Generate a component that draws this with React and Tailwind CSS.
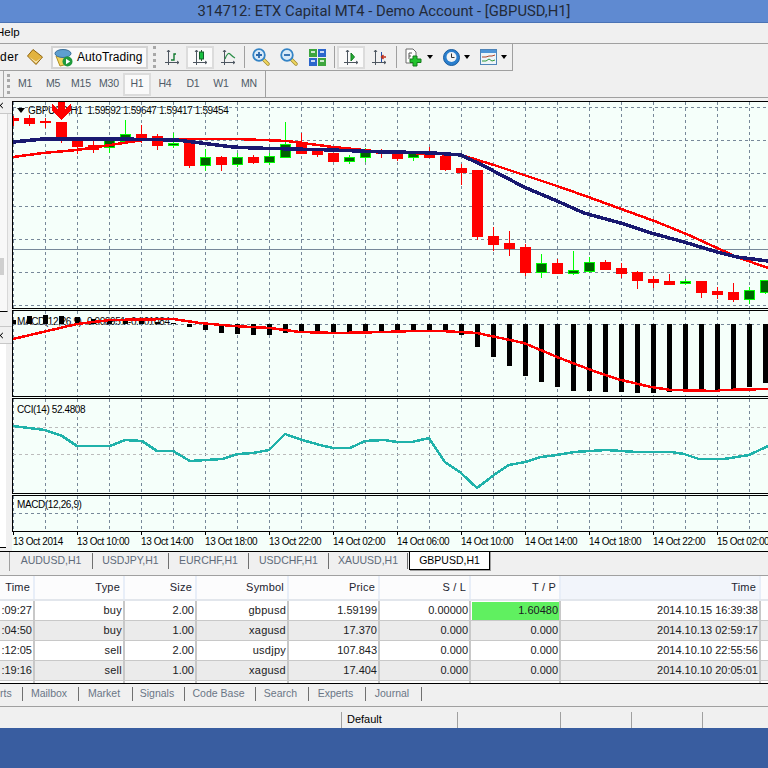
import React from "react";

// [bodyTop, bodyBottom, wickTop, wickBottom, up]
const candles = [
  [118, 120, 116, 125, 0], [118, 123, 115, 125, 0], [121, 122, 118, 127, 0], [122, 137, 122, 142, 0],
  [141, 146, 141, 153, 0], [145, 149, 141, 152, 0], [140, 147, 137, 152, 1], [134, 141, 120, 141, 1],
  [134, 137, 125, 142, 0], [136, 145, 134, 149, 0], [143, 145, 133, 147, 1], [141, 165, 138, 167, 0],
  [157, 165, 149, 170, 1], [157, 164, 156, 170, 0], [157, 164, 153, 166, 1], [157, 162, 155, 163, 0],
  [156, 162, 153, 164, 1], [144, 157, 122, 157, 1], [143, 153, 133, 153, 0], [151, 154, 148, 156, 0],
  [153, 161, 153, 161, 0], [157, 161, 155, 163, 1], [149, 157, 148, 161, 1], [150, 153, 149, 157, 0],
  [152, 158, 152, 160, 0], [153, 157, 153, 160, 1], [152, 157, 147, 157, 0], [156, 169, 156, 170, 0],
  [168, 172, 164, 184, 0], [170, 236, 170, 239, 0], [236, 244, 227, 250, 0], [243, 248, 231, 255, 0],
  [247, 272, 244, 275, 0], [263, 272, 254, 277, 1], [263, 273, 259, 273, 0], [270, 273, 251, 274, 1],
  [262, 271, 257, 272, 1], [262, 269, 260, 269, 0], [268, 273, 263, 277, 0], [272, 280, 271, 288, 0],
  [279, 282, 276, 287, 0], [281, 284, 274, 284, 0], [281, 283, 279, 284, 1], [281, 292, 281, 297, 0],
  [291, 294, 287, 298, 0], [292, 299, 283, 301, 0], [290, 299, 287, 303, 1], [280, 292, 280, 293, 1],
];

const navyLine = "13,142 43,139 120,139 177,140 233,147 253,148 333,150 384,152 397,152 434,153 461,155 484,166 524,187 557,201 584,213 624,224 651,233 684,242 717,252 737,257 768,261";
const redLine = "13,157 43,153 77,150 117,144 143,140 177,139 237,139 287,141 333,147 384,152 461,155 494,165 524,175 557,186 591,198 624,210 657,222 691,236 717,248 737,257 768,268";
const signalLine = "13,339 77,324 110,320 173,319 200,323 233,326 270,328 300,332 337,333 384,332 414,331 441,331 477,333 524,343 557,357 591,370 617,379 651,387 671,390 717,391 721,390 768,389";
const cciLine = "13,426 45,430 62,436 77,446 110,446 125,440 142,441 157,451 173,451 190,461 222,459 238,454 253,453 269,450 285,434 302,440 320,445 333,448 350,448 365,441 384,440 397,442 412,442 429,438 445,462 461,473 477,488 494,475 509,465 525,462 541,457 557,455 574,452 606,450 637,452 671,452 684,454 699,459 724,459 749,455 768,446";

// y where each MACD bar stops, bar starts at the 324 zero line
const macdBars = [320, 316, 315, 316, 317, 319, 320, 321, 321, 322, 323, 327, 330, 333, 334, 335, 335, 333, 332, 332, 332, 332, 331, 331, 332, 332, 331, 332, 335, 347, 357, 366, 376, 382, 387, 391, 391, 392, 392, 393, 393, 392, 391, 391, 390, 389, 387, 383];

const gridX = Array.from({ length: 24 }, (_, i) => 13 + i * 32);
const timeLabels = ["13 Oct 2014", "13 Oct 10:00", "13 Oct 14:00", "13 Oct 18:00", "13 Oct 22:00", "14 Oct 02:00", "14 Oct 06:00", "14 Oct 10:00", "14 Oct 14:00", "14 Oct 18:00", "14 Oct 22:00", "15 Oct 02:00"];
const frames = ["M1", "M5", "M15", "M30", "H1", "H4", "D1", "W1", "MN"];

const chartTabs = [
  { name: "AUDUSD,H1", w: "w-[83px]" },
  { name: "USDJPY,H1", w: "w-[76px]" },
  { name: "EURCHF,H1", w: "w-[80px]" },
  { name: "USDCHF,H1", w: "w-[80px]" },
  { name: "XAUUSD,H1", w: "w-[79px]" },
];

const bottomTabs = [
  { name: "rts", w: "w-[23px]", cls: "justify-start" },
  { name: "Mailbox", w: "w-[56px]" },
  { name: "Market", w: "w-[54px]" },
  { name: "Signals", w: "w-[52px]" },
  { name: "Code Base", w: "w-[71px]" },
  { name: "Search", w: "w-[53px]" },
  { name: "Experts", w: "w-[57px]" },
  { name: "Journal", w: "w-[56px]" },
];

const rows = [
  [":09:27", "buy", "2.00", "gbpusd", "1.59199", "0.00000", "1.60480", "2014.10.15 16:39:38"],
  [":04:50", "buy", "1.00", "xagusd", "17.370", "0.000", "0.000", "2014.10.13 02:59:17"],
  [":12:05", "sell", "2.00", "usdjpy", "107.843", "0.000", "0.000", "2014.10.10 22:55:56"],
  [":19:16", "sell", "1.00", "xagusd", "17.404", "0.000", "0.000", "2014.10.10 20:05:01"],
];
const heads = ["Time", "Type", "Size", "Symbol", "Price", "S / L", "T / P", "Time"];
const tableCols = "grid grid-cols-[35px_90px_72px_92px_91px_91px_90px_200px_7px]";

function Grid({ y, top, height, hColor = "#778899" }) {
  return (
    <g stroke="#778899" strokeWidth="1" strokeDasharray="3 3">
      {gridX.map((x) => <line key={x} x1={x + 0.5} x2={x + 0.5} y1={top} y2={top + height} />)}
      {y.map((v) => <line key={v} x1="13" x2="768" y1={v + 0.5} y2={v + 0.5} stroke={hColor} />)}
    </g>
  );
}

function Pane({ top, height, h, label, labelTop = "top-[4px]", labelLeft = "left-[4px]", children, extra }) {
  return (
    <div className={`relative border-y border-l border-black bg-[#f5fffa] ${h}`}>
      <div className={`absolute ${labelLeft} ${labelTop} whitespace-nowrap text-[10px] leading-[14px] tracking-[-0.38px] text-black`}>{label}</div>
      <svg className="relative block" width="755" height={height} viewBox={`13 ${top} 755 ${height}`} shapeRendering="crispEdges">
        {children}
      </svg>
      {extra}
    </div>
  );
}

function Axis({ children }) {
  return (
    <svg width="16" height="17" viewBox="0 0 16 17" fill="none">
      <path d="M4.5 1V16M1 13.5H15M3 3L4.5 1L6 3M13 12L15 13.5L13 15" stroke="#4d5660" strokeWidth="1" />
      {children}
    </svg>
  );
}

function Magnifier({ plus }) {
  return (
    <svg width="18" height="18" viewBox="0 0 18 18" fill="none">
      <path d="M11 11L16 16" stroke="#a08a30" strokeWidth="3.4" strokeLinecap="round" />
      <path d="M11 11L16 16" stroke="#f1d860" strokeWidth="1.8" strokeLinecap="round" />
      <circle cx="7" cy="7" r="5.8" fill="#d9eaf8" stroke="#3484c6" strokeWidth="1.8" />
      <path d={plus ? "M4 7H10M7 4V10" : "M4 7H10"} stroke="#2a69ad" strokeWidth="1.8" />
    </svg>
  );
}

function Arrow() {
  return (
    <svg className="ml-[4px]" width="6" height="4" viewBox="0 0 6 4"><path d="M0 0H6L3 4Z" fill="#000" /></svg>
  );
}

function Sep({ cls }) {
  return <div className={`h-[22px] w-px bg-[#a0a0a0] ${cls}`} />;
}

function Cell({ pressed, cls = "", children }) {
  return (
    <div className={`flex h-[23px] w-[28px] items-center justify-center ${pressed ? "border-2 border-[#dcdcdc] bg-[#fafafa]" : ""} ${cls}`}>
      {children}
    </div>
  );
}

function CloseGlyph() {
  return (
    <svg width="3" height="7" viewBox="0 0 3 7"><path d="M-2 0.5L3 6.5M3 0.5L-2 6.5" stroke="#000" fill="none" /></svg>
  );
}

export default function App() {
  return (
    <div className="flex h-[768px] w-[768px] flex-col overflow-hidden bg-[#f0f0f0] font-['Liberation_Sans',sans-serif] text-[11px] text-black">
      {/* title */}
      <div className="flex h-[23px] items-center justify-center border-b border-[#4a73b5] bg-[#5f8ad1] font-['Roboto',sans-serif] text-[14.8px] text-[#232a38]">
        314712: ETX Capital MT4 - Demo Account - [GBPUSD,H1]
      </div>

      {/* menu */}
      <div className="-ml-[4px] flex h-[20px] items-center text-[11.5px]">Help</div>

      {/* main toolbar */}
      <div className="h-[28px] border-t border-[#a0a0a0]">
        <div className="flex h-[27px] w-[513px] items-center border-r border-b border-[#a0a0a0]">
          <span className="w-[27px] text-[12px] tracking-[0.5px]">der</span>
          <svg width="16" height="16" viewBox="0 0 16 16">
            <path d="M0.5 7L6 0.5L15.5 8L9 15.5Z" fill="#e2b340" stroke="#8f6410" />
            <path d="M1.5 7.5L9 14L14.5 8.5L9 12.5Z" fill="#f7ecc4" />
          </svg>
          <div className="ml-[8px] flex h-[23px] w-[97px] items-center border-2 border-[#d4d4d4] bg-[#fafafa] pl-[1px]">
            <svg width="19" height="19" viewBox="0 0 19 19">
              <path d="M2 8L13 7L14 16L6 18Z" fill="#f2d45c" stroke="#b08f20" />
              <ellipse cx="9" cy="5.5" rx="8" ry="4" fill="#5d9fd0" stroke="#3a6f99" />
              <circle cx="13.5" cy="13.5" r="5" fill="#1f9a3c" />
              <path d="M12 10.8L16.2 13.5L12 16.2Z" fill="#fff" />
            </svg>
            <span className="ml-[4px] text-[12px] tracking-[0.05px]">AutoTrading</span>
          </div>
          <div className="ml-[5px] h-[22px] w-[3px] border-l-[3px] border-dotted border-[#a8a8a8]" />
          <Cell cls="ml-[2px]">
            <Axis><path d="M7 11H10V5H12" stroke="#127a30" strokeWidth="1.4" /></Axis>
          </Cell>
          <Cell pressed>
            <Axis>
              <path d="M9.5 1V12" stroke="#2a5a30" />
              <rect x="7.5" y="3" width="4" height="7" fill="#18c040" stroke="#14602a" />
            </Axis>
          </Cell>
          <Cell>
            <Axis><path d="M5 10C7 4 9 4 10 5S13 8 15 9" stroke="#2b8f48" strokeWidth="1.2" /></Axis>
          </Cell>
          <Sep cls="ml-[2px]" />
          <Cell cls="ml-[2px]"><Magnifier plus /></Cell>
          <Cell><Magnifier /></Cell>
          <Cell>
            <svg width="17" height="17" viewBox="0 0 17 17">
              <rect x="0" y="0" width="8" height="8" fill="#3ea63e" />
              <rect x="9" y="0" width="8" height="8" fill="#2c66cc" />
              <rect x="0" y="9" width="8" height="8" fill="#2c66cc" />
              <rect x="9" y="9" width="8" height="8" fill="#3ea63e" />
              <path d="M2 3H6M11 3H15M2 12H6M11 12H15" stroke="#fff" strokeWidth="1.6" />
            </svg>
          </Cell>
          <Sep cls="ml-[3px]" />
          <Cell pressed cls="ml-[2px]">
            <Axis><path d="M8 4L11.5 8L8 12Z" fill="#20b030" stroke="#127a20" /></Axis>
          </Cell>
          <Cell>
            <Axis>
              <path d="M10.5 3V13" stroke="#2450a8" />
              <path d="M15 8H11M12.5 6L10.5 8L12.5 10" stroke="#c0301c" strokeWidth="1.4" />
            </Axis>
          </Cell>
          <Sep cls="ml-[3px]" />
          <svg className="ml-[8px]" width="18" height="19" viewBox="0 0 18 19">
            <path d="M1 1H8L11 4V15H1Z" fill="#fff" stroke="#6a6a6a" />
            <path d="M4 11V5H7M4 8H6" stroke="#555" fill="none" />
            <path d="M8 8H12V11H16V14.5H12V18H8V14.5H5V11H8Z" fill="#22c42e" stroke="#15781c" />
          </svg>
          <Arrow />
          <svg className="ml-[10px]" width="17" height="17" viewBox="0 0 17 17">
            <circle cx="8.5" cy="8.5" r="8" fill="#2a7fce" stroke="#1a5c9c" />
            <circle cx="8.5" cy="8" r="5" fill="#f2f4f4" />
            <path d="M8.5 4.5V8.5H11.5" stroke="#333" fill="none" />
          </svg>
          <Arrow />
          <svg className="ml-[10px]" width="17" height="16" viewBox="0 0 17 16">
            <rect x="0.5" y="0.5" width="16" height="15" fill="#eef4f8" stroke="#4e84b8" />
            <rect x="1" y="1" width="15" height="3" fill="#4e94d6" />
            <path d="M2 8L6 8L9 7L12 7L15 6" stroke="#b0452a" fill="none" />
            <path d="M2 12L6 12L9 10L12 12L15 11" stroke="#2f9a3a" fill="none" />
          </svg>
          <Arrow />
        </div>
      </div>

      {/* timeframes */}
      <div className="h-[27px] border-b border-[#a0a0a0]">
        <div className="flex h-[26px] w-[266px] items-center border-r border-[#a0a0a0]">
          <div className="ml-[3px] h-[26px] w-px bg-[#a8a8a8]" />
          <div className="ml-[3px] h-[20px] w-[4px] border-l-[3px] border-dotted border-[#a8a8a8]" />
          <div className="flex">
            {frames.map((f) => (
              <div key={f} className={`flex h-[23px] w-[28px] items-center justify-center text-[10.5px] tracking-[-0.2px] text-[#4f5a66] ${f === "H1" ? "border-2 border-[#dcdcdc] bg-[#fafafa]" : ""}`}>
                {f}
              </div>
            ))}
          </div>
        </div>
      </div>

      {/* workspace */}
      <div className="flex h-[453px]">
        <div className="flex w-[12px] flex-col">
          <div className="flex h-[16px] items-center border-b border-[#c8c8c8]"><CloseGlyph /></div>
          <div className="h-[198px] w-[8px] border-r border-b border-[#d8d8d8] border-b-black bg-[#f8f8f8] pt-[144px]">
            <div className="h-[17px] w-[4px] bg-[#cfcfcf]" />
          </div>
          <div className="mt-[14px] flex h-[18px] items-center border-y border-[#c8c8c8]"><CloseGlyph /></div>
          <div className="h-[204px] w-[6px] border-b border-black bg-white" />
        </div>

        <div className="flex w-[756px] flex-col gap-px bg-[#f5fffa]">
          <div className="-mb-px h-[3px] bg-[#f0f0f0]" />
          <Pane
            top={102}
            height={206}
            h="h-[208px]"
            label={<span className="ml-[15px]">GBPUSD,H1&nbsp; 1.59592 1.59647 1.59417 1.59454</span>}
            labelTop="top-[2px]"
            labelLeft="left-0"
            extra={
              <svg className="absolute left-[4px] top-[6px]" width="8" height="5" viewBox="0 0 8 5"><path d="M0 0H8L4 5Z" fill="#000" /></svg>
            }
          >
            <Grid y={[107, 140, 173, 206, 239, 272, 305]} top={102} height={206} />
            <line x1="13" x2="768" y1="249.5" y2="249.5" stroke="#778899" />
            {candles.map((c, i) => {
              const x = 13 + i * 16;
              const [t, b, wt, wb, up] = c;
              const col = up ? "#00ff00" : "#ff0000";
              return (
                <g key={i}>
                  <rect x={x} y={wt} width="1" height={wb - wt + 1} fill={col} />
                  {up ? (
                    <>
                      <rect x={x - 5} y={t} width="11" height={b - t + 1} fill="#00ff00" />
                      {b - t > 1 && <rect x={x - 4} y={t + 1} width="9" height={b - t - 1} fill="#006400" />}
                    </>
                  ) : (
                    <rect x={x - 5} y={t} width="11" height={b - t + 1} fill="#ff0000" />
                  )}
                </g>
              );
            })}
            <polyline points={redLine} fill="none" stroke="#ff0000" strokeWidth="2.5" />
            <polyline points={navyLine} fill="none" stroke="#191970" strokeWidth="3.5" />
            <polygon points="58,102 65,102 65,109 71,104 71,111 61,120 52,111 52,104 58,109" fill="#ff0000" />
          </Pane>
          <Pane top={311} height={85} h="h-[87px]" label="MACD(12,26,9) -0.000951 -0.001084">
            <Grid y={[324]} top={311} height={85} />
            {macdBars.map((v, i) => {
              const x = 11 + i * 16;
              return <rect key={i} x={x} y={Math.min(v, 324)} width="5" height={Math.abs(v - 324)} fill="#000" />;
            })}
            <polyline points={signalLine} fill="none" stroke="#ff0000" strokeWidth="2.5" />
          </Pane>
          <Pane top={399} height={94} h="h-[96px]" label="CCI(14) 52.4808">
            <Grid y={[427, 454]} top={399} height={94} hColor="#bcbcbc" />
            <polyline points={cciLine} fill="none" stroke="#20b2aa" strokeWidth="2.5" />
          </Pane>
          <Pane top={496} height={35} h="h-[37px]" label="MACD(12,26,9)" labelTop="top-[2px]">
            <Grid y={[513]} top={496} height={35} />
          </Pane>
          <div className="-mt-px flex h-[19px] pl-px">
            {timeLabels.map((t) => (
              <div key={t} className="w-[64px] shrink-0">
                <div className="h-[3px] w-px bg-black" />
                <div className="whitespace-nowrap text-[10px] leading-[13px] tracking-[-0.42px]">{t}</div>
              </div>
            ))}
          </div>
        </div>
      </div>

      {/* chart tabs */}
      <div className="flex h-[24px] items-start border-t border-black pl-[9px] text-[10.5px] text-[#5f6b7a]">
        <div className="h-[19px] w-px bg-[#a0a0a0]" />
        {chartTabs.map((t) => (
          <div key={t.name} className={`flex h-[16px] ${t.w} mt-px items-center justify-center border-r border-[#707070]`}>
            {t.name}
          </div>
        ))}
        <div className="-mt-px ml-px flex h-[19px] w-[81px] items-center justify-center border border-black bg-white text-black shadow-[1px_1px_0_#a0a0a0]">
          GBPUSD,H1
        </div>
      </div>

      {/* trade table */}
      <div className="border-t border-[#a0a0a0]">
        <div className={`${tableCols} h-[25px] border-b-2 border-[#e2e6ec] bg-[#fcfcfd] text-[#1c2430]`}>
          {heads.map((h, i) => (
            <div key={i} className={`flex items-center justify-end border-r-2 border-[#e8eef8] pr-[3px] tracking-[0.2px] ${i === 7 ? "bg-[#f2f5fb]" : ""}`}>
              {h}
            </div>
          ))}
          <div />
        </div>
        {rows.map((r, ri) => (
          <div key={ri} className={`${tableCols} h-[20px] border-b border-[#c8c8c8] text-[#1a1a22] ${ri % 2 ? "bg-[#ebebeb]" : "bg-white"}`}>
            {r.map((v, i) => (
              <div key={i} className={`flex items-center justify-end border-r-2 border-[#c8c8c8] ${i === 1 || i === 3 ? "pr-px tracking-[0.25px]" : "pr-px"}`}>
                {ri === 0 && i === 6 ? (
                  <div className="-mr-px flex h-[18px] w-full items-center justify-end bg-[#60f060] pr-px">{v}</div>
                ) : v}
              </div>
            ))}
            <div />
          </div>
        ))}
        <div className={`${tableCols} h-[2px] bg-white`}>
          {heads.map((h, i) => <div key={i} className="border-r-2 border-[#c8c8c8]" />)}
        </div>
      </div>

      {/* terminal tabs */}
      <div className="flex h-[24px] items-center border-y border-t-black border-b-[#a0a0a0] pb-[2px] text-[10.5px] text-[#6a7686]">
        {bottomTabs.map((t) => (
          <div key={t.name} className={`flex h-[14px] ${t.w} ${t.cls || "justify-center pr-[3px]"} items-center border-r border-[#707070]`}>
            {t.name}
          </div>
        ))}
      </div>

      {/* status bar */}
      <div className="flex h-[21px] items-center pt-[4px]">
        <div className="w-[341px]" />
        <div className="flex h-[16px] w-[116px] items-center border-l border-[#a0a0a0] pl-[5px]">Default</div>
        <div className="h-[16px] w-[103px] border-l border-[#a0a0a0]" />
        <div className="h-[16px] w-[71px] border-l border-[#a0a0a0]" />
        <div className="h-[16px] w-[71px] border-l border-[#a0a0a0]" />
        <div className="h-[16px] flex-1 border-l border-[#a0a0a0]" />
      </div>

      {/* desktop taskbar */}
      <div className="flex-1 bg-[#395da0]" />
    </div>
  );
}
